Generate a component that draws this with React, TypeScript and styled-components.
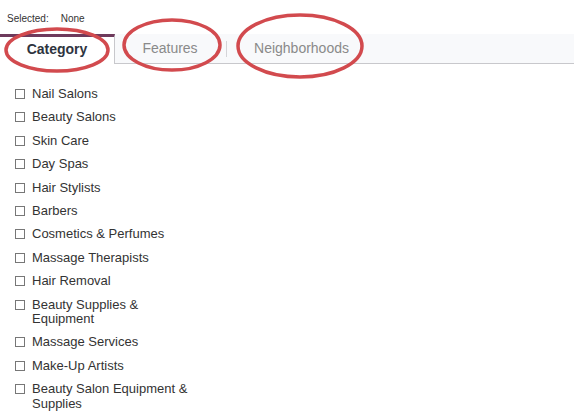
import styled, { createGlobalStyle } from 'styled-components'

const Global = createGlobalStyle`
  body {
    margin: 0;
    background: #fff;
    font-family: "Liberation Sans", Arial, sans-serif;
  }
`

const Page = styled.div`
  position: relative;
  width: 574px;
  height: 417px;
  overflow: hidden;
`

const Selected = styled.div`
  display: flex;
  gap: 12px;
  height: 34px;
  padding: 13px 0 0 7px;
  box-sizing: border-box;
  font-size: 10px;
  color: #333;
`

const TabBar = styled.div`
  display: flex;
  align-items: stretch;
  height: 30px;
  background: #f8f9fb;
  border-bottom: 1px solid #c8c8cc;
  box-sizing: border-box;
`

const Tab = styled.div<{ $active?: boolean; $width: number }>`
  display: flex;
  align-items: center;
  justify-content: center;
  width: ${p => p.$width}px;
  box-sizing: border-box;
  font-size: 14px;
  font-weight: ${p => (p.$active ? 700 : 400)};
  color: ${p => (p.$active ? '#2e3440' : '#8a8a8a')};
  background: ${p => (p.$active ? '#fff' : 'transparent')};
  border-top: 3px solid ${p => (p.$active ? '#6e3a5c' : 'transparent')};
  border-right: 1px solid ${p => (p.$active ? '#c8c8cc' : 'transparent')};
  margin-bottom: ${p => (p.$active ? '-1px' : '0')};
  padding-bottom: 4px;
`

const Divider = styled.div`
  width: 1px;
  background: #d4d4d8;
  margin: 7px 0 6px;
`

const List = styled.ul`
  list-style: none;
  margin: 0;
  padding: 23px 0 0 15px;
  display: flex;
  flex-direction: column;
  gap: 8.9px;
`

const Item = styled.li`
  display: flex;
  align-items: flex-start;
  gap: 7px;
  font-size: 13px;
  line-height: 14.5px;
  color: #333;
  width: 178px;
`

const Box = styled.span`
  flex: none;
  width: 10px;
  height: 10px;
  margin-top: 2px;
  border: 1px solid #777;
  box-sizing: border-box;
  background: #fff;
`

const Marks = styled.svg`
  position: absolute;
  left: 0;
  top: 0;
  pointer-events: none;
`

const items = [
  'Nail Salons',
  'Beauty Salons',
  'Skin Care',
  'Day Spas',
  'Hair Stylists',
  'Barbers',
  'Cosmetics & Perfumes',
  'Massage Therapists',
  'Hair Removal',
  'Beauty Supplies & Equipment',
  'Massage Services',
  'Make-Up Artists',
  'Beauty Salon Equipment & Supplies',
]

export default function App() {
  return (
    <Page>
      <Global />
      <Selected>
        <span>Selected:</span>
        <span>None</span>
      </Selected>
      <TabBar>
        <Tab $active $width={115}>Category</Tab>
        <Tab $width={111}>Features</Tab>
        <Divider />
        <Tab $width={150}>Neighborhoods</Tab>
      </TabBar>
      <List>
        {items.map(t => (
          <Item key={t}>
            <Box />
            <span>{t}</span>
          </Item>
        ))}
      </List>
      <Marks width="574" height="417">
        <g fill="none" stroke="#d24a4e" strokeWidth="3.5">
          <ellipse cx="57" cy="50" rx="51" ry="21" />
          <ellipse cx="172" cy="45" rx="48" ry="25" />
          <ellipse cx="300" cy="46" rx="62" ry="31" />
        </g>
      </Marks>
    </Page>
  )
}
